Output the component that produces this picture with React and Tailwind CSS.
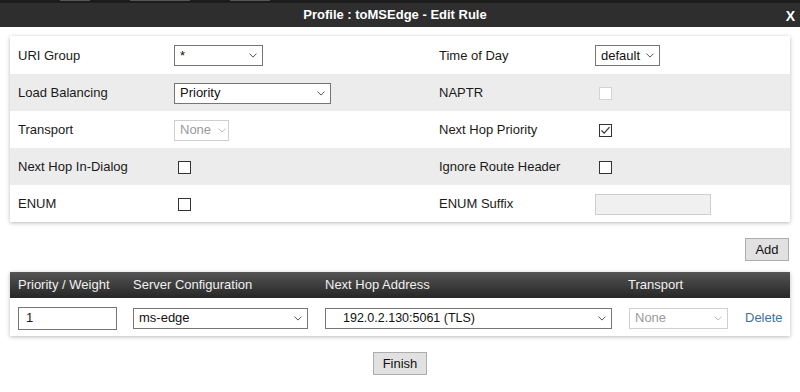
import React from 'react';

const font = { fontFamily: '"Liberation Sans", Arial, sans-serif' };

function Chevron({ disabled }) {
  return (
    <svg width="8" height="5" viewBox="0 0 8 5" className="shrink-0">
      <path
        d="M0.5 0.6 L4 4.1 L7.5 0.6"
        fill="none"
        stroke={disabled ? '#bbbbbb' : '#555555'}
        strokeWidth="1"
      />
    </svg>
  );
}

function Select({ value, className, disabled, textClass = 'pl-[5px]', pad = 'pr-[5px]' }) {
  return (
    <div
      className={`flex items-center justify-between border bg-white text-[13px] ${pad} ${
        disabled ? 'border-[#cfcfcf] text-[#9a9a9a]' : 'border-[#767676] text-[#111]'
      } ${className}`}
    >
      <span className={textClass}>{value}</span>
      <Chevron disabled={disabled} />
    </div>
  );
}

function Checkbox({ checked, disabled }) {
  return (
    <div
      className={`ml-[4px] w-[13px] h-[13px] border flex items-center justify-center ${
        disabled ? 'border-[#d4d4d4] bg-white' : 'border-[#333] bg-white'
      }`}
    >
      {checked && (
        <svg width="11" height="11" viewBox="0 0 11 11">
          <path d="M1.5 5.5 L4.2 8.2 L9.5 2.2" fill="none" stroke="#333" strokeWidth="1.2" />
        </svg>
      )}
    </div>
  );
}

function Row({ gray, first, label, control, rlabel, rcontrol }) {
  return (
    <div
      className={`grid grid-cols-[156px_265px_156px_1fr] items-center pl-[8px] pt-[1px] ${
        first ? 'h-[38px]' : 'h-[37px]'
      } ${gray ? 'bg-[#ececec]' : 'bg-white'}`}
    >
      <div>{label}</div>
      <div>{control}</div>
      <div>{rlabel}</div>
      <div>{rcontrol}</div>
    </div>
  );
}

export default function App() {
  return (
    <div className="w-[800px] h-[392px] bg-white text-[13px] text-[#1a1a1a] overflow-hidden" style={font}>
      {/* page behind the dialog */}
      <div className="h-[3px] bg-[#1c1c1c] flex gap-[40px] pl-[60px] overflow-hidden">
        <div className="w-[30px] h-[1px] bg-[#555]" />
        <div className="w-[60px] h-[1px] bg-[#555]" />
        <div className="w-[40px] h-[1px] bg-[#555]" />
      </div>

      {/* title bar */}
      <div className="relative h-[24px] bg-[#2e2e2e] flex items-center justify-center text-white font-bold text-[13px]">
        <span className="pr-[10px]">Profile : toMSEdge - Edit Rule</span>
        <span className="absolute right-[5px] top-[3px] text-[14px]">X</span>
      </div>

      <div className="px-[10px] pt-[9px]">
        {/* rule settings */}
        <div className="bg-white shadow-[0_1px_4px_rgba(0,0,0,0.28)]">
          <Row
            first
            label="URI Group"
            control={<Select value="*" className="w-[89px] h-[21px]" />}
            rlabel="Time of Day"
            rcontrol={<Select value="default" className="w-[65px] h-[21px]" />}
          />
          <Row
            gray
            label="Load Balancing"
            control={<Select value="Priority" className="w-[157px] h-[21px]" />}
            rlabel="NAPTR"
            rcontrol={<Checkbox disabled />}
          />
          <Row
            label="Transport"
            control={<Select value="None" disabled pad="pr-[2px]" className="w-[55px] h-[21px]" />}
            rlabel="Next Hop Priority"
            rcontrol={<Checkbox checked />}
          />
          <Row
            gray
            label="Next Hop In-Dialog"
            control={<Checkbox />}
            rlabel="Ignore Route Header"
            rcontrol={<Checkbox />}
          />
          <Row
            label="ENUM"
            control={<Checkbox />}
            rlabel="ENUM Suffix"
            rcontrol={<div className="w-[116px] h-[21px] border border-[#cfcfcf] bg-[#f0f0f0]" />}
          />
        </div>

        <div className="flex justify-end pt-[16px] pr-[1px]">
          <button className="w-[44px] h-[23px] border border-[#adadad] bg-[#e1e1e1] text-[13px] text-[#111]">
            Add
          </button>
        </div>

        {/* servers table */}
        <div className="mt-[11px] bg-white shadow-[0_1px_4px_rgba(0,0,0,0.28)]">
          <div className="grid grid-cols-[115px_192px_303px_117px_1fr] items-center h-[26px] pl-[8px] bg-gradient-to-b from-[#555555] to-[#272727] text-[#f0f0f0]">
            <div>Priority / Weight</div>
            <div>Server Configuration</div>
            <div>Next Hop Address</div>
            <div>Transport</div>
            <div />
          </div>
          <div className="grid grid-cols-[115px_192px_303px_117px_1fr] items-center h-[38px] pl-[8px] pt-[2px]">
            <div className="w-[99px] h-[23px] border border-[#767676] flex items-center pl-[7px]">1</div>
            <Select value="ms-edge" className="w-[175px] h-[21px]" />
            <Select value="192.0.2.130:5061 (TLS)" textClass="pl-[17px] text-[12.5px]" className="w-[287px] h-[21px]" />
            <Select value="None" disabled className="w-[99px] h-[21px] ml-[1px]" />
            <div className="text-[#46709f]">Delete</div>
          </div>
        </div>

        <div className="flex justify-center pt-[16px]">
          <button className="w-[54px] h-[23px] border border-[#adadad] bg-[#e1e1e1] text-[13px] text-[#111]">
            Finish
          </button>
        </div>
      </div>
    </div>
  );
}
